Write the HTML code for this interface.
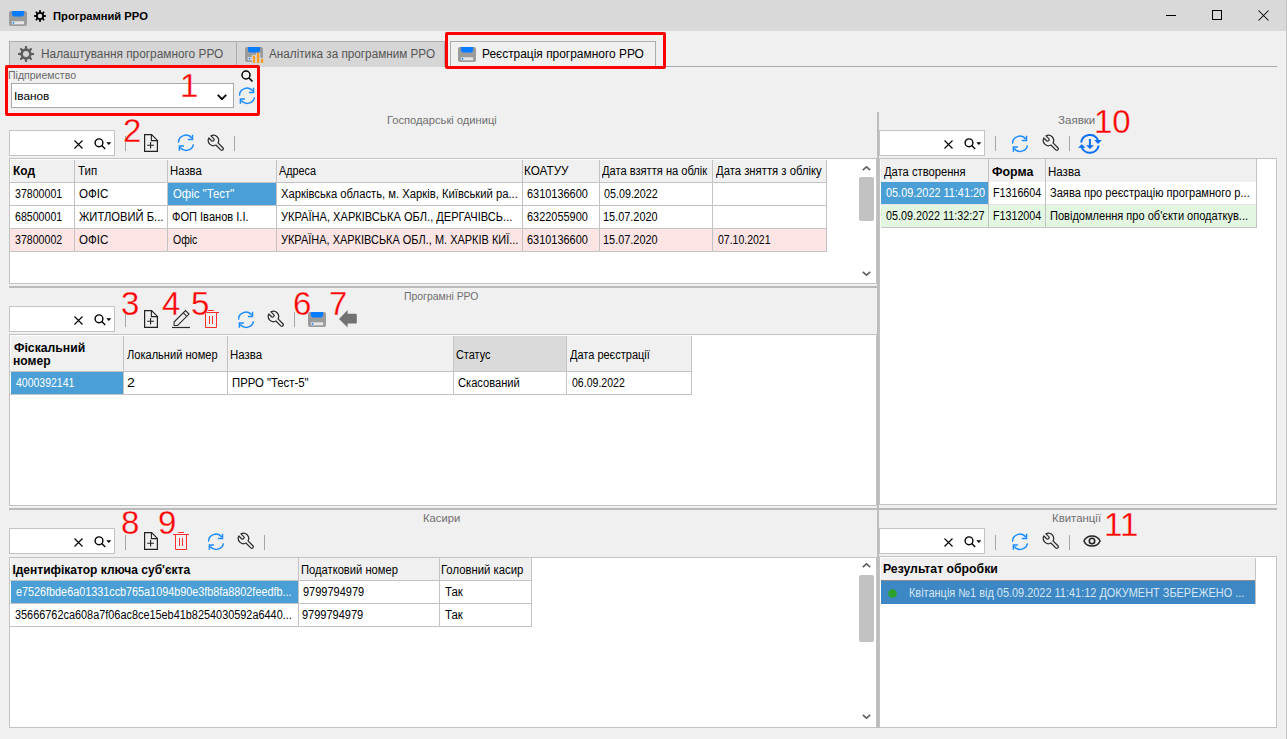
<!DOCTYPE html><html><head><meta charset="utf-8"><style>html,body{margin:0;padding:0;}body{width:1287px;height:739px;position:relative;overflow:hidden;background:#f0f0f0;font-family:"Liberation Sans",sans-serif;}.t{position:absolute;white-space:pre;line-height:13px;transform-origin:0 0;}.rn{position:absolute;font-size:33px;line-height:32px;color:#ff0000;white-space:pre;-webkit-text-stroke:0.3px #f0f0f0;paint-order:normal;}</style></head><body>
<div style="position:absolute;left:0px;top:0px;width:1287px;height:31px;background:#d9d9d9;"></div>
<svg style="position:absolute;left:9px;top:11px;" width="19" height="17" viewBox="0 0 19 17"><rect x="0" y="0" width="18" height="15" rx="2" fill="#9b9b9b"/><path d="M2.9 0 H15.1 V3.3 Q15.1 5.4 13 5.4 H5 Q2.9 5.4 2.9 3.3 Z" fill="#0a7cff"/><rect x="2.9" y="10.3" width="12.2" height="3" fill="#e6e6e6"/><circle cx="4.5" cy="11.8" r="0.9" fill="#0a7cff"/></svg>
<svg style="position:absolute;left:34px;top:10px;" width="12" height="12" viewBox="0 0 12 12"><polygon points="5.02,1.92 5.29,0.04 6.71,0.04 6.98,1.92 8.19,2.42 9.71,1.29 10.71,2.29 9.58,3.81 10.08,5.02 11.96,5.29 11.96,6.71 10.08,6.98 9.58,8.19 10.71,9.71 9.71,10.71 8.19,9.58 6.98,10.08 6.71,11.96 5.29,11.96 5.02,10.08 3.81,9.58 2.29,10.71 1.29,9.71 2.42,8.19 1.92,6.98 0.04,6.71 0.04,5.29 1.92,5.02 2.42,3.81 1.29,2.29 2.29,1.29 3.81,2.42" fill="#000"/><circle cx="6.0" cy="6.0" r="2.28" fill="#d9d9d9"/></svg>
<div class="t" style="left:52.98px;top:10px;font-size:11px;font-weight:bold;color:#000;transform:scaleX(1.0174);">Програмний РРО</div>
<div style="position:absolute;left:1166px;top:15px;width:10px;height:1px;background:#000;"></div>
<div style="position:absolute;left:1212px;top:10px;width:10px;height:10px;border:1px solid #000;box-sizing:border-box;"></div>
<svg style="position:absolute;left:1258px;top:10px;" width="11" height="11" viewBox="0 0 11 11"><path d="M0.5 0.5 L10.5 10.5 M10.5 0.5 L0.5 10.5" stroke="#000" stroke-width="1.05"/></svg>
<div style="position:absolute;left:1286px;top:0px;width:1px;height:739px;background:#c4c4c4;"></div>
<div style="position:absolute;left:9px;top:66px;width:1268px;height:1px;background:#a9a9a9;"></div>
<div style="position:absolute;left:9px;top:41px;width:228px;height:26px;background:#d6d6d6;border:1px solid #acacac;border-bottom:none;box-sizing:border-box;"></div>
<svg style="position:absolute;left:18px;top:46px;" width="16" height="16" viewBox="0 0 16 16"><polygon points="6.69,2.55 7.06,0.06 8.94,0.06 9.31,2.55 10.93,3.23 12.95,1.72 14.28,3.05 12.77,5.07 13.45,6.69 15.94,7.06 15.94,8.94 13.45,9.31 12.77,10.93 14.28,12.95 12.95,14.28 10.93,12.77 9.31,13.45 8.94,15.94 7.06,15.94 6.69,13.45 5.07,12.77 3.05,14.28 1.72,12.95 3.23,10.93 2.55,9.31 0.06,8.94 0.06,7.06 2.55,6.69 3.23,5.07 1.72,3.05 3.05,1.72 5.07,3.23" fill="#5e5e5e"/><circle cx="8.0" cy="8.0" r="3.04" fill="#d6d6d6"/></svg>
<div class="t" style="left:40.71px;top:48px;font-size:12px;font-weight:normal;color:#555;transform:scaleX(0.9874);">Налаштування програмного РРО</div>
<div style="position:absolute;left:237px;top:41px;width:208px;height:26px;background:#d6d6d6;border:1px solid #acacac;border-left:none;border-bottom:none;box-sizing:border-box;"></div>
<svg style="position:absolute;left:245px;top:47px;" width="19" height="17" viewBox="0 0 19 17"><rect x="0" y="0" width="18" height="15" rx="2" fill="#9b9b9b"/><path d="M2.9 0 H15.1 V3.3 Q15.1 5.4 13 5.4 H5 Q2.9 5.4 2.9 3.3 Z" fill="#0a7cff"/><rect x="6.8" y="7.9" width="4.3" height="9" fill="#d6d6d6"/><rect x="10.9" y="5.9" width="4.3" height="11" fill="#d6d6d6"/><rect x="14.9" y="10.9" width="4.3" height="6" fill="#d6d6d6"/><rect x="7.8" y="8.8" width="2.3" height="7.1" fill="#ff9a1a"/><rect x="11.9" y="5.9" width="2.3" height="10" fill="#ff9a1a"/><rect x="15.9" y="11.9" width="2.3" height="4" fill="#ff9a1a"/><rect x="2.8" y="10.1" width="3.9" height="3.1" fill="#e3e3e3"/><circle cx="4.5" cy="11.6" r="0.9" fill="#0a7cff"/></svg>
<div class="t" style="left:269.00px;top:48px;font-size:12px;font-weight:normal;color:#555;transform:scaleX(0.9765);">Аналітика за програмним РРО</div>
<div style="position:absolute;left:450px;top:41px;width:206px;height:27px;background:#f0f0f0;border:1px solid #acacac;border-bottom:none;box-sizing:border-box;"></div>
<svg style="position:absolute;left:458px;top:47px;" width="19" height="17" viewBox="0 0 19 17"><rect x="0" y="0" width="18" height="15" rx="2" fill="#9b9b9b"/><path d="M2.9 0 H15.1 V3.3 Q15.1 5.4 13 5.4 H5 Q2.9 5.4 2.9 3.3 Z" fill="#0a7cff"/><rect x="2.9" y="10.3" width="12.2" height="3" fill="#e6e6e6"/><circle cx="4.5" cy="11.8" r="0.9" fill="#0a7cff"/></svg>
<div class="t" style="left:481.91px;top:48px;font-size:12px;font-weight:normal;color:#000;transform:scaleX(0.9944);">Реєстрація програмного РРО</div>
<div style="position:absolute;left:445px;top:32px;width:221px;height:37px;border:3px solid #ff0000;box-sizing:border-box;border-radius:2px;"></div>
<div class="t" style="left:7.89px;top:69px;font-size:11px;font-weight:normal;color:#6a6a6a;transform:scaleX(0.9571);">Підприемство</div>
<div style="position:absolute;left:11px;top:83px;width:223px;height:25px;background:#fff;border:1px solid #a9a9a9;box-sizing:border-box;"></div>
<div class="t" style="left:13.53px;top:90px;font-size:11px;font-weight:normal;color:#000;transform:scaleX(1.0742);">Іванов</div>
<svg style="position:absolute;left:217px;top:94px;" width="10" height="6" viewBox="0 0 10 6"><path d="M0.8 0.8 L5.0 5.2 L9.2 0.8" fill="none" stroke="#000" stroke-width="1.8"/></svg>
<svg style="position:absolute;left:241px;top:70px;" width="12" height="12" viewBox="0 0 12 12"><circle cx="5" cy="5" r="4" fill="none" stroke="#000" stroke-width="1.5"/><line x1="8" y1="8" x2="11.5" y2="11.5" stroke="#000" stroke-width="1.6"/></svg>
<svg style="position:absolute;left:239px;top:87px;" width="17" height="18" viewBox="0 0 17 18"><path d="M0.45 8.75 A7.5 7.5 0 0 1 13.75 3.93" fill="none" stroke="#1a8cff" stroke-width="1.5"/><path d="M14.5 0.8 V5.6 H9.9" fill="none" stroke="#1a8cff" stroke-width="1.5"/><path d="M15.45 10.3 A7.5 7.5 0 0 1 2.25 13.57" fill="none" stroke="#1a8cff" stroke-width="1.5"/><path d="M1.4 16.8 V12.1 H5.9" fill="none" stroke="#1a8cff" stroke-width="1.5"/></svg>
<div style="position:absolute;left:5px;top:65px;width:255px;height:51px;border:3px solid #ff0000;box-sizing:border-box;border-radius:2px;"></div>
<div class="rn" style="left:180px;top:70px">1</div>
<div style="position:absolute;left:877px;top:112px;width:2px;height:616px;background:#bdbdbd;"></div>
<div class="t" style="left:386.99px;top:114px;font-size:11px;font-weight:normal;color:#6f6f6f;transform:scaleX(1.0140);">Господарські одиниці</div>
<div style="position:absolute;left:9px;top:130px;width:106px;height:26px;background:#fff;border:1px solid #c3c3c3;box-sizing:border-box;"></div>
<svg style="position:absolute;left:74px;top:140px;" width="9" height="9" viewBox="0 0 9 9"><path d="M0.5 0.5 L8.5 8.5 M8.5 0.5 L0.5 8.5" stroke="#000" stroke-width="1.1"/></svg>
<svg style="position:absolute;left:94px;top:138px;" width="18" height="12" viewBox="0 0 18 12"><circle cx="5" cy="4.8" r="3.9" fill="none" stroke="#000" stroke-width="1.4"/><line x1="7.8" y1="7.6" x2="11.2" y2="11" stroke="#000" stroke-width="1.4"/><path d="M12.3 4.3 H17.3 L14.8 7 Z" fill="#000"/></svg>
<div style="position:absolute;left:125px;top:136px;width:1px;height:15px;background:#a6a6a6;"></div>
<svg style="position:absolute;left:144px;top:134px;" width="14" height="18" viewBox="0 0 14 18"><path d="M0.6 0.6 H7.6 L13.4 6.4 V17.4 H0.6 Z" fill="none" stroke="#222" stroke-width="1.2"/><path d="M7.4 0.6 V6.6 H13.4" fill="none" stroke="#222" stroke-width="1.1"/><path d="M3.2 11.3 H10 M6.6 8 V14.6" stroke="#222" stroke-width="1.1"/></svg>
<svg style="position:absolute;left:178px;top:134px;" width="17" height="18" viewBox="0 0 17 18"><path d="M0.45 8.75 A7.5 7.5 0 0 1 13.75 3.93" fill="none" stroke="#1a8cff" stroke-width="1.5"/><path d="M14.5 0.8 V5.6 H9.9" fill="none" stroke="#1a8cff" stroke-width="1.5"/><path d="M15.45 10.3 A7.5 7.5 0 0 1 2.25 13.57" fill="none" stroke="#1a8cff" stroke-width="1.5"/><path d="M1.4 16.8 V12.1 H5.9" fill="none" stroke="#1a8cff" stroke-width="1.5"/></svg>
<svg style="position:absolute;left:207px;top:134px" width="18" height="18" viewBox="-0.3 -0.3 19 19"><path d="M1.65 3.91 A5.5 5.5 0 0 0 9.09 11.35 L14.21 16.47 A1.6 1.6 0 0 0 16.47 14.21 L11.35 9.09 A5.5 5.5 0 0 0 3.91 1.65 L6.78 4.52 A1.6 1.6 0 0 1 4.52 6.78 Z" fill="none" stroke="#2b2b2b" stroke-width="1.3" stroke-linejoin="round"/></svg>
<div style="position:absolute;left:234px;top:136px;width:1px;height:15px;background:#a6a6a6;"></div>
<div class="rn" style="left:123px;top:115px">2</div>
<div style="position:absolute;left:9px;top:158px;width:868px;height:126px;background:#fff;border:1px solid #c3c3c3;box-sizing:border-box;"></div>
<div style="position:absolute;left:11px;top:160px;width:815px;height:22px;background:#f0f0f0;"></div>
<div style="position:absolute;left:10px;top:229px;width:816px;height:22px;background:#fde5e6;"></div>
<div style="position:absolute;left:168px;top:183px;width:108px;height:22px;background:#4a9fd6;"></div>
<div style="position:absolute;left:10px;top:182px;width:816px;height:1px;background:#c3c3c3;"></div>
<div style="position:absolute;left:10px;top:205px;width:816px;height:1px;background:#c3c3c3;"></div>
<div style="position:absolute;left:10px;top:228px;width:816px;height:1px;background:#c3c3c3;"></div>
<div style="position:absolute;left:10px;top:251px;width:816px;height:1px;background:#c3c3c3;"></div>
<div style="position:absolute;left:74px;top:160px;width:1px;height:92px;background:#c3c3c3;"></div>
<div style="position:absolute;left:167px;top:160px;width:1px;height:92px;background:#c3c3c3;"></div>
<div style="position:absolute;left:276px;top:160px;width:1px;height:92px;background:#c3c3c3;"></div>
<div style="position:absolute;left:522px;top:160px;width:1px;height:92px;background:#c3c3c3;"></div>
<div style="position:absolute;left:599px;top:160px;width:1px;height:92px;background:#c3c3c3;"></div>
<div style="position:absolute;left:712px;top:160px;width:1px;height:92px;background:#c3c3c3;"></div>
<div style="position:absolute;left:826px;top:160px;width:1px;height:92px;background:#c3c3c3;"></div>
<div class="t" style="left:12.90px;top:165px;font-size:12px;font-weight:bold;color:#000;">Код</div>
<div class="t" style="left:78.40px;top:165px;font-size:12px;font-weight:normal;color:#000;transform:scaleX(0.9579);">Тип</div>
<div class="t" style="left:169.85px;top:165px;font-size:12px;font-weight:normal;color:#000;transform:scaleX(0.9455);">Назва</div>
<div class="t" style="left:279.10px;top:165px;font-size:12px;font-weight:normal;color:#000;transform:scaleX(0.9024);">Адреса</div>
<div class="t" style="left:524.32px;top:165px;font-size:12px;font-weight:normal;color:#000;transform:scaleX(0.9778);">КОАТУУ</div>
<div class="t" style="left:601.90px;top:165px;font-size:12px;font-weight:normal;color:#000;transform:scaleX(0.9263);">Дата взяття на облік</div>
<div class="t" style="left:715.70px;top:165px;font-size:12px;font-weight:normal;color:#000;transform:scaleX(0.9420);">Дата зняття з обліку</div>
<div class="t" style="left:14.82px;top:188px;font-size:12px;font-weight:normal;color:#000;transform:scaleX(0.8846);">37800001</div>
<div class="t" style="left:79.30px;top:188px;font-size:12px;font-weight:normal;color:#000;transform:scaleX(0.9667);">ОФІС</div>
<div class="t" style="left:172.60px;top:188px;font-size:12px;font-weight:normal;color:#fff;transform:scaleX(0.9484);">Офіс "Тест"</div>
<div class="t" style="left:280.50px;top:188px;font-size:12px;font-weight:normal;color:#000;transform:scaleX(0.9381);">Харківська область, м. Харків, Київський ра...</div>
<div class="t" style="left:526.79px;top:188px;font-size:12px;font-weight:normal;color:#000;transform:scaleX(0.9123);">6310136600</div>
<div class="t" style="left:603.60px;top:188px;font-size:12px;font-weight:normal;color:#000;transform:scaleX(0.8950);">05.09.2022</div>
<div class="t" style="left:14.82px;top:211px;font-size:12px;font-weight:normal;color:#000;transform:scaleX(0.8846);">68500001</div>
<div class="t" style="left:79.30px;top:211px;font-size:12px;font-weight:normal;color:#000;transform:scaleX(0.9326);">ЖИТЛОВИЙ Б...</div>
<div class="t" style="left:171.68px;top:211px;font-size:12px;font-weight:normal;color:#000;transform:scaleX(0.9222);">ФОП Іванов І.І.</div>
<div class="t" style="left:280.78px;top:211px;font-size:12px;font-weight:normal;color:#000;transform:scaleX(0.9225);">УКРАЇНА, ХАРКІВСЬКА ОБЛ., ДЕРГАЧІВСЬ...</div>
<div class="t" style="left:526.79px;top:211px;font-size:12px;font-weight:normal;color:#000;transform:scaleX(0.9123);">6322055900</div>
<div class="t" style="left:602.69px;top:211px;font-size:12px;font-weight:normal;color:#000;transform:scaleX(0.9102);">15.07.2020</div>
<div class="t" style="left:14.82px;top:234px;font-size:12px;font-weight:normal;color:#000;transform:scaleX(0.8846);">37800002</div>
<div class="t" style="left:79.30px;top:234px;font-size:12px;font-weight:normal;color:#000;transform:scaleX(0.9667);">ОФІС</div>
<div class="t" style="left:172.60px;top:234px;font-size:12px;font-weight:normal;color:#000;transform:scaleX(0.8741);">Офіс</div>
<div class="t" style="left:280.79px;top:234px;font-size:12px;font-weight:normal;color:#000;transform:scaleX(0.9140);">УКРАЇНА, ХАРКІВСЬКА ОБЛ., М. ХАРКІВ КИЇ...</div>
<div class="t" style="left:526.79px;top:234px;font-size:12px;font-weight:normal;color:#000;transform:scaleX(0.9123);">6310136600</div>
<div class="t" style="left:602.69px;top:234px;font-size:12px;font-weight:normal;color:#000;transform:scaleX(0.9102);">15.07.2020</div>
<div class="t" style="left:717.60px;top:234px;font-size:12px;font-weight:normal;color:#000;transform:scaleX(0.8750);">07.10.2021</div>
<svg style="position:absolute;left:862px;top:166px;" width="9" height="5" viewBox="0 0 9 5"><path d="M0.8 4.2 L4.5 0.8 L8.2 4.2" fill="none" stroke="#606060" stroke-width="1.6"/></svg>
<div style="position:absolute;left:859px;top:177px;width:15px;height:44px;background:#c2c2c2;border-radius:2px;"></div>
<svg style="position:absolute;left:862px;top:271px;" width="9" height="5" viewBox="0 0 9 5"><path d="M0.8 0.8 L4.5 4.2 L8.2 0.8" fill="none" stroke="#606060" stroke-width="1.6"/></svg>
<div style="position:absolute;left:9px;top:286px;width:868px;height:2px;background:#bababa;"></div>
<div class="t" style="left:404.15px;top:290px;font-size:11px;font-weight:normal;color:#6f6f6f;transform:scaleX(0.9481);">Програмні РРО</div>
<div style="position:absolute;left:9px;top:306px;width:106px;height:26px;background:#fff;border:1px solid #c3c3c3;box-sizing:border-box;"></div>
<svg style="position:absolute;left:74px;top:316px;" width="9" height="9" viewBox="0 0 9 9"><path d="M0.5 0.5 L8.5 8.5 M8.5 0.5 L0.5 8.5" stroke="#000" stroke-width="1.1"/></svg>
<svg style="position:absolute;left:94px;top:314px;" width="18" height="12" viewBox="0 0 18 12"><circle cx="5" cy="4.8" r="3.9" fill="none" stroke="#000" stroke-width="1.4"/><line x1="7.8" y1="7.6" x2="11.2" y2="11" stroke="#000" stroke-width="1.4"/><path d="M12.3 4.3 H17.3 L14.8 7 Z" fill="#000"/></svg>
<div style="position:absolute;left:125px;top:312px;width:1px;height:15px;background:#a6a6a6;"></div>
<svg style="position:absolute;left:144px;top:310px;" width="14" height="18" viewBox="0 0 14 18"><path d="M0.6 0.6 H7.6 L13.4 6.4 V17.4 H0.6 Z" fill="none" stroke="#222" stroke-width="1.2"/><path d="M7.4 0.6 V6.6 H13.4" fill="none" stroke="#222" stroke-width="1.1"/><path d="M3.2 11.3 H10 M6.6 8 V14.6" stroke="#222" stroke-width="1.1"/></svg>
<svg style="position:absolute;left:172px;top:309px;" width="18" height="20" viewBox="0 0 18 20"><path d="M2.1 13 L13.5 1.6 L17 5.1 L5.6 16.5 H2.1 Z" fill="none" stroke="#2b2b2b" stroke-width="1.1" stroke-linejoin="miter"/><path d="M11.3 3.8 L14.8 7.3" stroke="#2b2b2b" stroke-width="1.1"/><path d="M0 18.5 H18" stroke="#2b2b2b" stroke-width="1.2"/></svg>
<svg style="position:absolute;left:203px;top:310px;" width="16" height="18" viewBox="0 0 16 18"><path d="M5.2 0.5 H10.9" stroke="#ff2a2a" stroke-width="1"/><path d="M0 2.5 H16" stroke="#ff2a2a" stroke-width="1"/><path d="M2.5 2.5 V17.5 H13.5 V2.5" fill="none" stroke="#ff2a2a" stroke-width="1"/><path d="M6.5 6 V14 M9.5 6 V14" stroke="#ff2a2a" stroke-width="1"/></svg>
<svg style="position:absolute;left:238px;top:311px;" width="17" height="18" viewBox="0 0 17 18"><path d="M0.45 8.75 A7.5 7.5 0 0 1 13.75 3.93" fill="none" stroke="#1a8cff" stroke-width="1.5"/><path d="M14.5 0.8 V5.6 H9.9" fill="none" stroke="#1a8cff" stroke-width="1.5"/><path d="M15.45 10.3 A7.5 7.5 0 0 1 2.25 13.57" fill="none" stroke="#1a8cff" stroke-width="1.5"/><path d="M1.4 16.8 V12.1 H5.9" fill="none" stroke="#1a8cff" stroke-width="1.5"/></svg>
<svg style="position:absolute;left:267px;top:310px" width="18" height="18" viewBox="-0.3 -0.3 19 19"><path d="M1.65 3.91 A5.5 5.5 0 0 0 9.09 11.35 L14.21 16.47 A1.6 1.6 0 0 0 16.47 14.21 L11.35 9.09 A5.5 5.5 0 0 0 3.91 1.65 L6.78 4.52 A1.6 1.6 0 0 1 4.52 6.78 Z" fill="none" stroke="#2b2b2b" stroke-width="1.3" stroke-linejoin="round"/></svg>
<div style="position:absolute;left:294px;top:312px;width:1px;height:15px;background:#a6a6a6;"></div>
<svg style="position:absolute;left:308px;top:312px;" width="19" height="17" viewBox="0 0 19 17"><rect x="0" y="0" width="18" height="15" rx="2" fill="#9b9b9b"/><path d="M2.9 0 H15.1 V3.3 Q15.1 5.4 13 5.4 H5 Q2.9 5.4 2.9 3.3 Z" fill="#0a7cff"/><rect x="2.9" y="10.3" width="12.2" height="3" fill="#e6e6e6"/><circle cx="4.5" cy="11.8" r="0.9" fill="#0a7cff"/></svg>
<svg style="position:absolute;left:339px;top:310px;" width="18" height="18" viewBox="0 0 18 18"><path d="M0 9 L8.6 0 V3.8 H16.6 Q17.8 3.8 17.8 5 V12.4 Q17.8 13.6 16.6 13.6 H8.6 V17.4 Z" fill="#727272"/></svg>
<div class="rn" style="left:121px;top:288px">3</div>
<div class="rn" style="left:162px;top:288px">4</div>
<div class="rn" style="left:191px;top:288px">5</div>
<div class="rn" style="left:293px;top:288px">6</div>
<div class="rn" style="left:329px;top:288px">7</div>
<div style="position:absolute;left:9px;top:334px;width:868px;height:172px;background:#fff;border:1px solid #c3c3c3;box-sizing:border-box;"></div>
<div style="position:absolute;left:11px;top:336px;width:680px;height:35px;background:#f0f0f0;"></div>
<div style="position:absolute;left:454px;top:336px;width:112px;height:35px;background:#dadada;"></div>
<div style="position:absolute;left:11px;top:372px;width:112px;height:22px;background:#4a9fd6;"></div>
<div style="position:absolute;left:10px;top:371px;width:681px;height:1px;background:#c3c3c3;"></div>
<div style="position:absolute;left:10px;top:394px;width:681px;height:1px;background:#c3c3c3;"></div>
<div style="position:absolute;left:123px;top:336px;width:1px;height:59px;background:#c3c3c3;"></div>
<div style="position:absolute;left:227px;top:336px;width:1px;height:59px;background:#c3c3c3;"></div>
<div style="position:absolute;left:453px;top:336px;width:1px;height:59px;background:#c3c3c3;"></div>
<div style="position:absolute;left:566px;top:336px;width:1px;height:59px;background:#c3c3c3;"></div>
<div style="position:absolute;left:691px;top:336px;width:1px;height:59px;background:#c3c3c3;"></div>
<div class="t" style="left:13.90px;top:342px;font-size:12px;font-weight:bold;color:#000;transform:scaleX(1.0188);">Фіскальний</div>
<div class="t" style="left:12.89px;top:355px;font-size:12px;font-weight:bold;color:#000;transform:scaleX(1.0083);">номер</div>
<div class="t" style="left:127.00px;top:349px;font-size:12px;font-weight:normal;color:#000;transform:scaleX(0.9214);">Локальний номер</div>
<div class="t" style="left:229.75px;top:349px;font-size:12px;font-weight:normal;color:#000;transform:scaleX(0.9545);">Назва</div>
<div class="t" style="left:455.89px;top:349px;font-size:12px;font-weight:normal;color:#000;transform:scaleX(0.9081);">Статус</div>
<div class="t" style="left:570.00px;top:349px;font-size:12px;font-weight:normal;color:#000;transform:scaleX(0.9161);">Дата реєстрації</div>
<div class="t" style="left:15.70px;top:377px;font-size:12px;font-weight:normal;color:#fff;transform:scaleX(0.8742);">4000392141</div>
<div class="t" style="left:127.12px;top:377px;font-size:12px;font-weight:normal;color:#000;transform:scaleX(1.1800);">2</div>
<div class="t" style="left:231.56px;top:377px;font-size:12px;font-weight:normal;color:#000;transform:scaleX(0.9450);">ПРРО "Тест-5"</div>
<div class="t" style="left:457.77px;top:377px;font-size:12px;font-weight:normal;color:#000;transform:scaleX(0.9277);">Скасований</div>
<div class="t" style="left:572.00px;top:377px;font-size:12px;font-weight:normal;color:#000;transform:scaleX(0.8800);">06.09.2022</div>
<div style="position:absolute;left:9px;top:508px;width:868px;height:2px;background:#bababa;"></div>
<div class="t" style="left:423.18px;top:512px;font-size:11px;font-weight:normal;color:#6f6f6f;transform:scaleX(1.0229);">Касири</div>
<div style="position:absolute;left:9px;top:528px;width:106px;height:26px;background:#fff;border:1px solid #c3c3c3;box-sizing:border-box;"></div>
<svg style="position:absolute;left:74px;top:538px;" width="9" height="9" viewBox="0 0 9 9"><path d="M0.5 0.5 L8.5 8.5 M8.5 0.5 L0.5 8.5" stroke="#000" stroke-width="1.1"/></svg>
<svg style="position:absolute;left:94px;top:536px;" width="18" height="12" viewBox="0 0 18 12"><circle cx="5" cy="4.8" r="3.9" fill="none" stroke="#000" stroke-width="1.4"/><line x1="7.8" y1="7.6" x2="11.2" y2="11" stroke="#000" stroke-width="1.4"/><path d="M12.3 4.3 H17.3 L14.8 7 Z" fill="#000"/></svg>
<div style="position:absolute;left:125px;top:535px;width:1px;height:15px;background:#a6a6a6;"></div>
<svg style="position:absolute;left:144px;top:532px;" width="14" height="18" viewBox="0 0 14 18"><path d="M0.6 0.6 H7.6 L13.4 6.4 V17.4 H0.6 Z" fill="none" stroke="#222" stroke-width="1.2"/><path d="M7.4 0.6 V6.6 H13.4" fill="none" stroke="#222" stroke-width="1.1"/><path d="M3.2 11.3 H10 M6.6 8 V14.6" stroke="#222" stroke-width="1.1"/></svg>
<svg style="position:absolute;left:173px;top:532px;" width="16" height="18" viewBox="0 0 16 18"><path d="M5.2 0.5 H10.9" stroke="#ff2a2a" stroke-width="1"/><path d="M0 2.5 H16" stroke="#ff2a2a" stroke-width="1"/><path d="M2.5 2.5 V17.5 H13.5 V2.5" fill="none" stroke="#ff2a2a" stroke-width="1"/><path d="M6.5 6 V14 M9.5 6 V14" stroke="#ff2a2a" stroke-width="1"/></svg>
<svg style="position:absolute;left:208px;top:533px;" width="17" height="18" viewBox="0 0 17 18"><path d="M0.45 8.75 A7.5 7.5 0 0 1 13.75 3.93" fill="none" stroke="#1a8cff" stroke-width="1.5"/><path d="M14.5 0.8 V5.6 H9.9" fill="none" stroke="#1a8cff" stroke-width="1.5"/><path d="M15.45 10.3 A7.5 7.5 0 0 1 2.25 13.57" fill="none" stroke="#1a8cff" stroke-width="1.5"/><path d="M1.4 16.8 V12.1 H5.9" fill="none" stroke="#1a8cff" stroke-width="1.5"/></svg>
<svg style="position:absolute;left:237px;top:532px" width="18" height="18" viewBox="-0.3 -0.3 19 19"><path d="M1.65 3.91 A5.5 5.5 0 0 0 9.09 11.35 L14.21 16.47 A1.6 1.6 0 0 0 16.47 14.21 L11.35 9.09 A5.5 5.5 0 0 0 3.91 1.65 L6.78 4.52 A1.6 1.6 0 0 1 4.52 6.78 Z" fill="none" stroke="#2b2b2b" stroke-width="1.3" stroke-linejoin="round"/></svg>
<div style="position:absolute;left:264px;top:535px;width:1px;height:15px;background:#a6a6a6;"></div>
<div class="rn" style="left:121px;top:507px">8</div>
<div class="rn" style="left:158px;top:507px">9</div>
<div style="position:absolute;left:9px;top:557px;width:868px;height:171px;background:#fff;border:1px solid #c3c3c3;box-sizing:border-box;"></div>
<div style="position:absolute;left:11px;top:558px;width:520px;height:22px;background:#f0f0f0;"></div>
<div style="position:absolute;left:11px;top:581px;width:287px;height:22px;background:#4a9fd6;"></div>
<div style="position:absolute;left:10px;top:580px;width:521px;height:1px;background:#c3c3c3;"></div>
<div style="position:absolute;left:10px;top:603px;width:521px;height:1px;background:#c3c3c3;"></div>
<div style="position:absolute;left:10px;top:626px;width:521px;height:1px;background:#c3c3c3;"></div>
<div style="position:absolute;left:298px;top:558px;width:1px;height:69px;background:#c3c3c3;"></div>
<div style="position:absolute;left:439px;top:558px;width:1px;height:69px;background:#c3c3c3;"></div>
<div style="position:absolute;left:531px;top:558px;width:1px;height:69px;background:#c3c3c3;"></div>
<div class="t" style="left:12.40px;top:564px;font-size:12px;font-weight:bold;color:#000;">Ідентифікатор ключа суб'єкта</div>
<div class="t" style="left:300.67px;top:564px;font-size:12px;font-weight:normal;color:#000;transform:scaleX(0.9320);">Податковий номер</div>
<div class="t" style="left:441.46px;top:564px;font-size:12px;font-weight:normal;color:#000;transform:scaleX(0.9430);">Головний касир</div>
<div class="t" style="left:15.60px;top:586px;font-size:12px;font-weight:normal;color:#fff;transform:scaleX(0.9013);">e7526fbde6a01331ccb765a1094b90e3fb8fa8802feedfb...</div>
<div class="t" style="left:302.58px;top:586px;font-size:12px;font-weight:normal;color:#000;transform:scaleX(0.9169);">9799794979</div>
<div class="t" style="left:444.80px;top:586px;font-size:12px;font-weight:normal;color:#000;transform:scaleX(0.9526);">Так</div>
<div class="t" style="left:14.69px;top:609px;font-size:12px;font-weight:normal;color:#000;transform:scaleX(0.9076);">35666762ca608a7f06ac8ce15eb41b8254030592a6440...</div>
<div class="t" style="left:301.58px;top:609px;font-size:12px;font-weight:normal;color:#000;transform:scaleX(0.9169);">9799794979</div>
<div class="t" style="left:444.80px;top:609px;font-size:12px;font-weight:normal;color:#000;transform:scaleX(0.9526);">Так</div>
<svg style="position:absolute;left:862px;top:563px;" width="9" height="5" viewBox="0 0 9 5"><path d="M0.8 4.2 L4.5 0.8 L8.2 4.2" fill="none" stroke="#606060" stroke-width="1.6"/></svg>
<div style="position:absolute;left:859px;top:575px;width:15px;height:67px;background:#c2c2c2;border-radius:2px;"></div>
<svg style="position:absolute;left:862px;top:714px;" width="9" height="5" viewBox="0 0 9 5"><path d="M0.8 0.8 L4.5 4.2 L8.2 0.8" fill="none" stroke="#606060" stroke-width="1.6"/></svg>
<div class="t" style="left:1058.25px;top:114px;font-size:11px;font-weight:normal;color:#6f6f6f;transform:scaleX(1.0500);">Заявки</div>
<div style="position:absolute;left:879px;top:130px;width:106px;height:26px;background:#fff;border:1px solid #c3c3c3;box-sizing:border-box;"></div>
<svg style="position:absolute;left:944px;top:140px;" width="9" height="9" viewBox="0 0 9 9"><path d="M0.5 0.5 L8.5 8.5 M8.5 0.5 L0.5 8.5" stroke="#000" stroke-width="1.1"/></svg>
<svg style="position:absolute;left:964px;top:138px;" width="18" height="12" viewBox="0 0 18 12"><circle cx="5" cy="4.8" r="3.9" fill="none" stroke="#000" stroke-width="1.4"/><line x1="7.8" y1="7.6" x2="11.2" y2="11" stroke="#000" stroke-width="1.4"/><path d="M12.3 4.3 H17.3 L14.8 7 Z" fill="#000"/></svg>
<div style="position:absolute;left:995px;top:136px;width:1px;height:15px;background:#a6a6a6;"></div>
<svg style="position:absolute;left:1012px;top:135px;" width="17" height="18" viewBox="0 0 17 18"><path d="M0.45 8.75 A7.5 7.5 0 0 1 13.75 3.93" fill="none" stroke="#1a8cff" stroke-width="1.5"/><path d="M14.5 0.8 V5.6 H9.9" fill="none" stroke="#1a8cff" stroke-width="1.5"/><path d="M15.45 10.3 A7.5 7.5 0 0 1 2.25 13.57" fill="none" stroke="#1a8cff" stroke-width="1.5"/><path d="M1.4 16.8 V12.1 H5.9" fill="none" stroke="#1a8cff" stroke-width="1.5"/></svg>
<svg style="position:absolute;left:1042px;top:134px" width="18" height="18" viewBox="-0.3 -0.3 19 19"><path d="M1.65 3.91 A5.5 5.5 0 0 0 9.09 11.35 L14.21 16.47 A1.6 1.6 0 0 0 16.47 14.21 L11.35 9.09 A5.5 5.5 0 0 0 3.91 1.65 L6.78 4.52 A1.6 1.6 0 0 1 4.52 6.78 Z" fill="none" stroke="#2b2b2b" stroke-width="1.3" stroke-linejoin="round"/></svg>
<div style="position:absolute;left:1069px;top:136px;width:1px;height:15px;background:#a6a6a6;"></div>
<svg style="position:absolute;left:1078px;top:134px;overflow:visible" width="24" height="21" viewBox="0 0 24 21"><path d="M3.11 8.51 A8.9 8.9 0 0 1 19.97 6.14" fill="none" stroke="#0b6ff2" stroke-width="2"/><path d="M16.3 6 L23.9 6 L20 10 Z" fill="#0b6ff2"/><path d="M20.66 11.45 A8.9 8.9 0 0 1 3.54 12.94" fill="none" stroke="#0b6ff2" stroke-width="2"/><path d="M-0.1 13.7 L3.8 10.2 L7.6 13.7 Z" fill="#0b6ff2"/><path d="M11.9 5 V12.2" stroke="#0b6ff2" stroke-width="2"/><path d="M8.1 11.3 H15.9 L12 15 Z" fill="#0b6ff2"/></svg>
<div class="rn" style="left:1094px;top:106px">10</div>
<div style="position:absolute;left:879px;top:158px;width:398px;height:347px;background:#fff;border:1px solid #c3c3c3;box-sizing:border-box;"></div>
<div style="position:absolute;left:881px;top:159px;width:375px;height:23px;background:#f0f0f0;"></div>
<div style="position:absolute;left:881px;top:182px;width:107px;height:22px;background:#4a9fd6;"></div>
<div style="position:absolute;left:881px;top:205px;width:375px;height:22px;background:#e3f6e1;"></div>
<div style="position:absolute;left:881px;top:204px;width:375px;height:1px;background:#e6e6e6;"></div>
<div style="position:absolute;left:881px;top:227px;width:375px;height:1px;background:#c3c3c3;"></div>
<div style="position:absolute;left:988px;top:159px;width:1px;height:69px;background:#c3c3c3;"></div>
<div style="position:absolute;left:1045px;top:159px;width:1px;height:69px;background:#c3c3c3;"></div>
<div style="position:absolute;left:1256px;top:159px;width:1px;height:69px;background:#c3c3c3;"></div>
<div class="t" style="left:884.00px;top:166px;font-size:12px;font-weight:normal;color:#000;transform:scaleX(0.9333);">Дата створення</div>
<div class="t" style="left:992.00px;top:166px;font-size:12px;font-weight:bold;color:#000;transform:scaleX(1.0300);">Форма</div>
<div class="t" style="left:1047.54px;top:166px;font-size:12px;font-weight:normal;color:#000;transform:scaleX(0.9606);">Назва</div>
<div class="t" style="left:885.50px;top:187px;font-size:12px;font-weight:normal;color:#fff;transform:scaleX(0.9073);">05.09.2022 11:41:20</div>
<div class="t" style="left:992.71px;top:187px;font-size:12px;font-weight:normal;color:#000;transform:scaleX(0.8925);">F1316604</div>
<div class="t" style="left:1049.68px;top:187px;font-size:12px;font-weight:normal;color:#000;transform:scaleX(0.9248);">Заява про реєстрацію програмного р...</div>
<div class="t" style="left:885.50px;top:210px;font-size:12px;font-weight:normal;color:#000;transform:scaleX(0.9009);">05.09.2022 11:32:27</div>
<div class="t" style="left:992.71px;top:210px;font-size:12px;font-weight:normal;color:#000;transform:scaleX(0.8925);">F1312004</div>
<div class="t" style="left:1049.68px;top:210px;font-size:12px;font-weight:normal;color:#000;transform:scaleX(0.9197);">Повідомлення про об'єкти оподаткув...</div>
<div style="position:absolute;left:879px;top:508px;width:398px;height:2px;background:#bababa;"></div>
<div class="t" style="left:1051.96px;top:512px;font-size:11px;font-weight:normal;color:#6f6f6f;transform:scaleX(1.0370);">Квитанції</div>
<div style="position:absolute;left:879px;top:528px;width:106px;height:26px;background:#fff;border:1px solid #c3c3c3;box-sizing:border-box;"></div>
<svg style="position:absolute;left:944px;top:538px;" width="9" height="9" viewBox="0 0 9 9"><path d="M0.5 0.5 L8.5 8.5 M8.5 0.5 L0.5 8.5" stroke="#000" stroke-width="1.1"/></svg>
<svg style="position:absolute;left:964px;top:536px;" width="18" height="12" viewBox="0 0 18 12"><circle cx="5" cy="4.8" r="3.9" fill="none" stroke="#000" stroke-width="1.4"/><line x1="7.8" y1="7.6" x2="11.2" y2="11" stroke="#000" stroke-width="1.4"/><path d="M12.3 4.3 H17.3 L14.8 7 Z" fill="#000"/></svg>
<div style="position:absolute;left:995px;top:535px;width:1px;height:15px;background:#a6a6a6;"></div>
<svg style="position:absolute;left:1012px;top:533px;" width="17" height="18" viewBox="0 0 17 18"><path d="M0.45 8.75 A7.5 7.5 0 0 1 13.75 3.93" fill="none" stroke="#1a8cff" stroke-width="1.5"/><path d="M14.5 0.8 V5.6 H9.9" fill="none" stroke="#1a8cff" stroke-width="1.5"/><path d="M15.45 10.3 A7.5 7.5 0 0 1 2.25 13.57" fill="none" stroke="#1a8cff" stroke-width="1.5"/><path d="M1.4 16.8 V12.1 H5.9" fill="none" stroke="#1a8cff" stroke-width="1.5"/></svg>
<svg style="position:absolute;left:1042px;top:532px" width="18" height="18" viewBox="-0.3 -0.3 19 19"><path d="M1.65 3.91 A5.5 5.5 0 0 0 9.09 11.35 L14.21 16.47 A1.6 1.6 0 0 0 16.47 14.21 L11.35 9.09 A5.5 5.5 0 0 0 3.91 1.65 L6.78 4.52 A1.6 1.6 0 0 1 4.52 6.78 Z" fill="none" stroke="#2b2b2b" stroke-width="1.3" stroke-linejoin="round"/></svg>
<div style="position:absolute;left:1069px;top:535px;width:1px;height:15px;background:#a6a6a6;"></div>
<svg style="position:absolute;left:1083px;top:535px;" width="18" height="12" viewBox="0 0 18 12"><path d="M0.9 6 C4 -0.8, 14 -0.8, 17.1 6 C14 12.8, 4 12.8, 0.9 6 Z" fill="none" stroke="#222" stroke-width="1.5"/><circle cx="9" cy="6" r="2.7" fill="none" stroke="#222" stroke-width="1.6"/></svg>
<div class="rn" style="left:1104px;top:509px">11</div>
<div style="position:absolute;left:879px;top:556px;width:398px;height:172px;background:#fff;border:1px solid #c3c3c3;box-sizing:border-box;"></div>
<div style="position:absolute;left:881px;top:558px;width:374px;height:22px;background:#f0f0f0;"></div>
<div style="position:absolute;left:881px;top:581px;width:374px;height:23px;background:#3d88c4;"></div>
<div style="position:absolute;left:881px;top:580px;width:374px;height:1px;background:#8a8a8a;"></div>
<div style="position:absolute;left:1255px;top:558px;width:1px;height:46px;background:#c3c3c3;"></div>
<div class="t" style="left:882.78px;top:563px;font-size:12px;font-weight:bold;color:#000;transform:scaleX(1.0207);">Результат обробки</div>
<svg style="position:absolute;left:888px;top:589px;" width="9" height="9" viewBox="0 0 9 9"><circle cx="4.5" cy="4.5" r="4.3" fill="#2ca02c"/></svg>
<div class="t" style="left:909.49px;top:587px;font-size:12px;font-weight:normal;color:#d6e6f4;transform:scaleX(0.9115);">Квітанція №1 від 05.09.2022 11:41:12 ДОКУМЕНТ ЗБЕРЕЖЕНО ...</div>
</body></html>
